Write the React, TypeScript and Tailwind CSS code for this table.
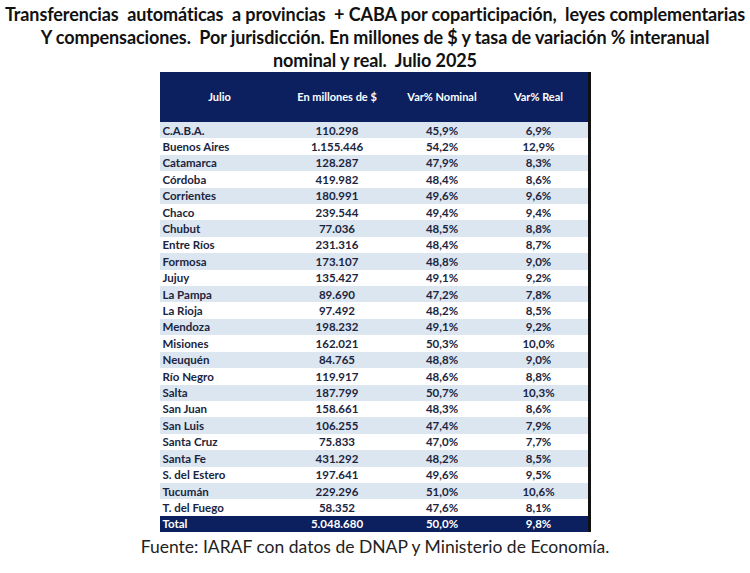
import React from "react";

const rows: [string, string, string, string][] = [
  ["C.A.B.A.", "110.298", "45,9%", "6,9%"],
  ["Buenos Aires", "1.155.446", "54,2%", "12,9%"],
  ["Catamarca", "128.287", "47,9%", "8,3%"],
  ["Córdoba", "419.982", "48,4%", "8,6%"],
  ["Corrientes", "180.991", "49,6%", "9,6%"],
  ["Chaco", "239.544", "49,4%", "9,4%"],
  ["Chubut", "77.036", "48,5%", "8,8%"],
  ["Entre Ríos", "231.316", "48,4%", "8,7%"],
  ["Formosa", "173.107", "48,8%", "9,0%"],
  ["Jujuy", "135.427", "49,1%", "9,2%"],
  ["La Pampa", "89.690", "47,2%", "7,8%"],
  ["La Rioja", "97.492", "48,2%", "8,5%"],
  ["Mendoza", "198.232", "49,1%", "9,2%"],
  ["Misiones", "162.021", "50,3%", "10,0%"],
  ["Neuquén", "84.765", "48,8%", "9,0%"],
  ["Río Negro", "119.917", "48,6%", "8,8%"],
  ["Salta", "187.799", "50,7%", "10,3%"],
  ["San Juan", "158.661", "48,3%", "8,6%"],
  ["San Luis", "106.255", "47,4%", "7,9%"],
  ["Santa Cruz", "75.833", "47,0%", "7,7%"],
  ["Santa Fe", "431.292", "48,2%", "8,5%"],
  ["S. del Estero", "197.641", "49,6%", "9,5%"],
  ["Tucumán", "229.296", "51,0%", "10,6%"],
  ["T. del Fuego", "58.352", "47,6%", "8,1%"],
];

export default function App() {
  return (
    <div
      className="w-[750px] h-[573px] bg-white flex flex-col items-center overflow-hidden"
      style={{ fontFamily: "Lato, 'Open Sans', sans-serif" }}
    >
      <div className="pt-[3px] text-center font-bold text-[18px] leading-[23px] text-[#111] tracking-[-0.1px] whitespace-pre">
        <div>{"Transferencias  automáticas  a provincias  + CABA por coparticipación,  leyes complementarias"}</div>
        <div>{"Y compensaciones.  Por jurisdicción. En millones de $ y tasa de variación % interanual"}</div>
        <div>{"nominal y real.  Julio 2025"}</div>
      </div>
      <div className="w-[431px] border-r-[3px] border-[#111] text-[11.5px] font-bold">
        <div className="flex h-[50px] items-center bg-[#0c1f5e] text-white text-[11px]">
          <div className="w-[120px] text-center">Julio</div>
          <div className="w-[115px] text-center">En millones de $</div>
          <div className="w-[95px] text-center">Var% Nominal</div>
          <div className="flex-1 text-center">Var% Real</div>
        </div>
        {rows.map((r, i) => (
          <div
            key={r[0]}
            className={`flex h-[16.42px] items-center text-[#1b2540] ${i % 2 === 0 ? "bg-[#dce6f1]" : "bg-white"}`}
          >
            <div className="w-[120px] pl-[3px]">{r[0]}</div>
            <div className="w-[115px] text-center">{r[1]}</div>
            <div className="w-[95px] text-center">{r[2]}</div>
            <div className="flex-1 text-center">{r[3]}</div>
          </div>
        ))}
        <div className="flex h-[16px] items-center bg-[#0c1f5e] text-white">
          <div className="w-[120px] pl-[3px]">Total</div>
          <div className="w-[115px] text-center">5.048.680</div>
          <div className="w-[95px] text-center">50,0%</div>
          <div className="flex-1 text-center">9,8%</div>
        </div>
      </div>
      <div className="mt-[4px] text-[17.5px] leading-[22px] text-[#222]">
        Fuente: IARAF con datos de DNAP y Ministerio de Economía.
      </div>
    </div>
  );
}
